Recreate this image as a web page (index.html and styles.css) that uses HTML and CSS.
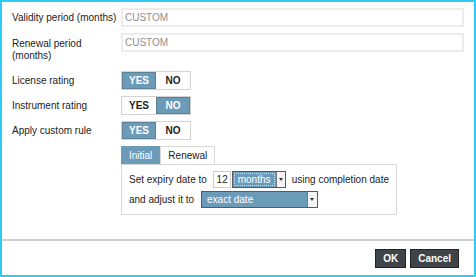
FILE: index.html
```html
<!DOCTYPE html>
<html lang="en">
<head>
    <meta charset="UTF-8">
    <title>Custom rule</title>
    <link rel="stylesheet" href="styles.css">
</head>
<body>
    <div class="dialog">
        <div class="content">
            <div class="row">
                <label class="label">Validity period (months)</label>
                <input type="text" class="text-input" value="CUSTOM">
            </div>
            <div class="row row-top">
                <label class="label label-wrap">Renewal period (months)</label>
                <input type="text" class="text-input" value="CUSTOM">
            </div>
            <div class="row">
                <label class="label">License rating</label>
                <div class="toggle">
                    <span class="toggle-btn active">YES</span>
                    <span class="toggle-btn">NO</span>
                </div>
            </div>
            <div class="row">
                <label class="label">Instrument rating</label>
                <div class="toggle">
                    <span class="toggle-btn">YES</span>
                    <span class="toggle-btn active">NO</span>
                </div>
            </div>
            <div class="row">
                <label class="label">Apply custom rule</label>
                <div class="toggle">
                    <span class="toggle-btn active">YES</span>
                    <span class="toggle-btn">NO</span>
                </div>
            </div>
            <div class="rule">
                <div class="tabs">
                    <span class="tab active">Initial</span>
                    <span class="tab">Renewal</span>
                </div>
                <div class="panel">
                    <div class="panel-row">
                        <span>Set expiry date to</span>
                        <span class="num-input">12</span>
                        <span class="select select-small">
                            <span class="select-value focused">months</span>
                            <span class="select-arrow"></span>
                        </span>
                        <span class="after-select">using completion date</span>
                    </div>
                    <div class="panel-row">
                        <span>and adjust it to</span>
                        <span class="select select-wide">
                            <span class="select-value">exact date</span>
                            <span class="select-arrow"></span>
                        </span>
                    </div>
                </div>
            </div>
        </div>
        <div class="footer">
            <button class="btn">OK</button>
            <button class="btn">Cancel</button>
        </div>
    </div>
</body>
</html>
```

FILE: styles.css
```css
body {
    margin: 0;
    font-family: "Liberation Sans", Arial, sans-serif;
    font-size: 10px;
    color: #222222;
    background-color: #ffffff;
}

.dialog {
    width: 476px;
    height: 277px;
    box-sizing: border-box;
    border: 2px solid #2ecbf4;
    display: flex;
    flex-direction: column;
}

.content {
    flex: 1;
    padding: 6px 10px 0 10px;
}

.row {
    display: flex;
    align-items: center;
    min-height: 19px;
    margin-bottom: 6px;
}

.row-top {
    align-items: flex-start;
    margin-bottom: 9px;
}

.label {
    width: 109px;
    flex-shrink: 0;
    line-height: 12px;
    white-space: nowrap;
}

.label-wrap {
    padding-top: 5px;
    white-space: normal;
    padding-right: 35px;
    width: 74px;
}

.text-input {
    flex: 1;
    height: 19px;
    box-sizing: border-box;
    border: 2px solid #ececec;
    padding: 0 2px;
    font-family: inherit;
    font-size: 10px;
    color: #8f8f8f;
    outline: none;
}

.toggle {
    display: flex;
    border: 1px solid #d4d4d4;
}

.toggle-btn {
    width: 34px;
    height: 17px;
    line-height: 17px;
    text-align: center;
    font-weight: bold;
    color: #222222;
    background-color: #ffffff;
}

.toggle-btn.active {
    background-color: #6c9bba;
    color: #ffffff;
    box-shadow: inset 0 0 0 1px #5c8199;
}

.rule {
    margin-left: 109px;
    margin-top: 1px;
    width: 276px;
}

.tabs {
    display: flex;
}

.tab {
    padding: 0 7px;
    height: 17px;
    line-height: 17px;
    border: 1px solid #d8d8d8;
    border-bottom: none;
    background-color: #ffffff;
}

.tab.active {
    background-color: #6c9bba;
    color: #ffffff;
    border-color: #6c9bba;
}

.panel {
    border: 1px solid #d8d8d8;
    padding: 6px 7px 7px 7px;
}

.panel-row {
    display: flex;
    align-items: center;
    gap: 4px;
    height: 16px;
    margin-bottom: 4px;
    white-space: nowrap;
}

.panel-row:last-child {
    margin-bottom: 0;
}

.num-input {
    width: 16px;
    height: 15px;
    line-height: 15px;
    border: 1px solid #cccccc;
    text-align: right;
    padding-right: 2px;
    margin-left: 2px;
}

.select {
    display: flex;
    height: 15px;
    border: 1px solid #5a5a5a;
    margin-left: -3px;
}

.select-small {
    width: 52px;
}

.select-wide {
    margin-left: 3px;
    width: 115px;
}

.after-select {
    margin-left: 2px;
}

.select-value {
    flex: 1;
    background-color: #6c9bba;
    color: #ffffff;
    line-height: 15px;
    padding: 0 5px;
}

.select-value.focused {
    outline: 1px dotted #d0e0ea;
    outline-offset: -2px;
}

.select-arrow {
    width: 9px;
    background-color: #f4f4f4;
    border-left: 1px solid #777777;
    position: relative;
}

.select-arrow::after {
    content: "";
    position: absolute;
    left: 2px;
    top: 6px;
    border-left: 2px solid transparent;
    border-right: 2px solid transparent;
    border-top: 3px solid #333333;
}

.footer {
    border-top: 2px solid #cfcfcf;
    height: 34px;
    display: flex;
    justify-content: flex-end;
    align-items: center;
    gap: 4px;
    padding-right: 15px;
}

.btn {
    height: 19px;
    padding: 0 7px;
    border: 1px solid #222222;
    background-color: #3f4448;
    color: #ffffff;
    font-family: inherit;
    font-size: 10px;
    font-weight: bold;
    cursor: pointer;
}
```
